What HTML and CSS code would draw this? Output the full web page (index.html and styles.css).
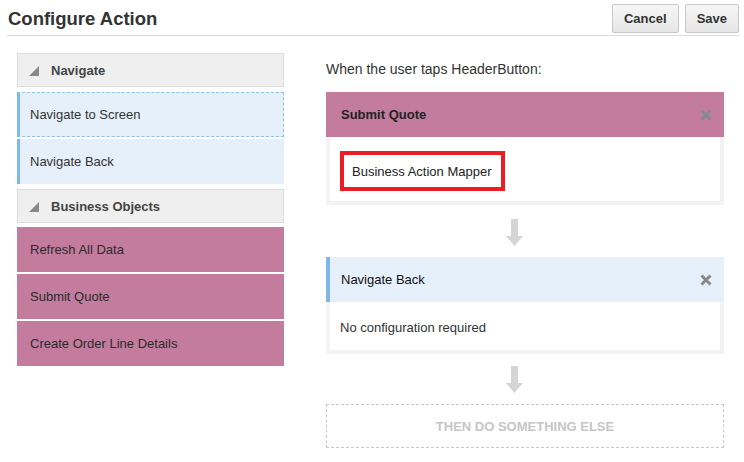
FILE: index.html
```html
<!DOCTYPE html>
<html>
<head>
<meta charset="utf-8">
<link rel="stylesheet" href="styles.css">
</head>
<body>
<header class="topbar">
  <h1 class="title">Configure Action</h1>
  <div class="actions">
    <button class="btn">Cancel</button>
    <button class="btn">Save</button>
  </div>
</header>
<main class="main">
  <section class="palette">
    <div class="group-header">
      <svg class="tri" width="10" height="10" viewBox="0 0 10 10"><polygon points="10,0 10,10 0,10" fill="#8a8a8a"/></svg>
      <span>Navigate</span>
    </div>
    <div class="item nav dashed">Navigate to Screen</div>
    <div class="item nav last">Navigate Back</div>
    <div class="group-header tight">
      <svg class="tri" width="10" height="10" viewBox="0 0 10 10"><polygon points="10,0 10,10 0,10" fill="#8a8a8a"/></svg>
      <span>Business Objects</span>
    </div>
    <div class="item biz">Refresh All Data</div>
    <div class="item biz">Submit Quote</div>
    <div class="item biz">Create Order Line Details</div>
  </section>
  <section class="flow">
    <div class="intro">When the user taps HeaderButton:</div>
    <div class="card">
      <div class="card-head pink">
        <span class="card-title bold">Submit Quote</span>
        <svg class="close" width="12" height="12" viewBox="0 0 12 12"><path d="M1.5 1.5 L10.5 10.5 M10.5 1.5 L1.5 10.5" stroke="#858b92" stroke-width="3" stroke-linecap="butt"/></svg>
      </div>
      <div class="card-body first">
        <div class="mapper">Business Action Mapper</div>
      </div>
    </div>
    <div class="arrow">
      <svg width="17" height="27" viewBox="0 0 17 27"><path d="M5 0 H12 V17 H17 L8.5 27 L0 17 H5 Z" fill="#d5d5d5"/></svg>
    </div>
    <div class="card">
      <div class="card-head blue">
        <span class="card-title">Navigate Back</span>
        <svg class="close" width="12" height="12" viewBox="0 0 12 12"><path d="M1.5 1.5 L10.5 10.5 M10.5 1.5 L1.5 10.5" stroke="#8a8a8a" stroke-width="3" stroke-linecap="butt"/></svg>
      </div>
      <div class="card-body second">No configuration required</div>
    </div>
    <div class="arrow second-arrow">
      <svg width="17" height="27" viewBox="0 0 17 27"><path d="M5 0 H12 V17 H17 L8.5 27 L0 17 H5 Z" fill="#d5d5d5"/></svg>
    </div>
    <div class="placeholder">THEN DO SOMETHING ELSE</div>
  </section>
</main>
</body>
</html>
```

FILE: styles.css
```css
* { box-sizing: border-box; }
body {
  margin: 0;
  font-family: "Liberation Sans", Arial, sans-serif;
  color: #333;
  background: #fff;
}
.topbar {
  display: flex;
  justify-content: space-between;
  align-items: center;
  margin: 0 5px 0 7px;
  padding: 4px 0 2px 0;
  border-bottom: 1px solid #dcdcdc;
}
.title {
  margin: 0 0 0 1px;
  font-size: 18.5px;
  font-weight: bold;
  color: #333;
}
.actions { display: flex; gap: 6px; }
.btn {
  height: 29px;
  padding: 0 11px;
  font-family: "Liberation Sans", Arial, sans-serif;
  font-size: 13px;
  font-weight: bold;
  color: #333;
  background: linear-gradient(#f6f6f6, #e6e6e6);
  border: 1px solid #c6c9cc;
  border-radius: 2px;
}
.main {
  display: flex;
  gap: 42px;
  padding: 17px 0 0 17px;
}
.palette { width: 267px; }
.group-header {
  display: flex;
  align-items: center;
  height: 34px;
  padding-left: 11px;
  background: #efefef;
  border: 1px solid #dcdcdc;
  font-size: 13px;
  font-weight: bold;
  color: #444;
  margin-bottom: 5px;
}
.group-header.tight { margin-bottom: 4px; }
.tri { margin-right: 12px; margin-top: 1px; }
.item {
  display: flex;
  align-items: center;
  height: 45px;
  padding-left: 10px;
  font-size: 13px;
  color: #333;
  margin-bottom: 2px;
}
.item.last { margin-bottom: 5px; }
.nav {
  background: #e6f0fa;
  border-left: 3px solid #7db8e7;
}
.nav.dashed {
  border-top: 1px dashed #8ec2ea;
  border-right: 1px dashed #8ec2ea;
  border-bottom: 1px dashed #8ec2ea;
}
.biz {
  background: #c37c9e;
  color: #2b2b2b;
  padding-left: 13px;
}
.flow { width: 398px; }
.intro {
  font-size: 14px;
  line-height: 16px;
  margin: 8px 0 15px 0;
  color: #333;
}
.card-head {
  display: flex;
  align-items: center;
  justify-content: space-between;
  height: 45px;
  padding: 0 12px 0 15px;
  font-size: 13px;
}
.card-head.pink { background: #c37c9e; }
.card-head.blue {
  background: #e6f0fa;
  border-left: 4px solid #7db8e7;
  padding-left: 11px;
}
.card-title { color: #111; }
.card-title.bold { font-weight: bold; color: #222; }
.card-body {
  background: #fff;
  border: 4px solid #f3f3f3;
  border-top: none;
  font-size: 13px;
}
.card-body.first { padding: 14px 10px 10px 10px; }
.card-body.second { padding: 18px 10px 14px 10px; line-height: 16px; }
.mapper {
  display: flex;
  align-items: center;
  width: 165px;
  height: 40px;
  padding-left: 8px;
  border: 4px solid #ed1c24;
  font-size: 13px;
  color: #222;
}
.arrow {
  display: flex;
  padding: 14px 0 11px 180px;
}
.arrow svg { display: block; }
.arrow.second-arrow { padding-top: 12px; }
.placeholder {
  display: flex;
  align-items: center;
  justify-content: center;
  height: 44px;
  border: 1px dashed #c8c8c8;
  font-size: 13px;
  font-weight: bold;
  color: #c6c6c6;
}
```
